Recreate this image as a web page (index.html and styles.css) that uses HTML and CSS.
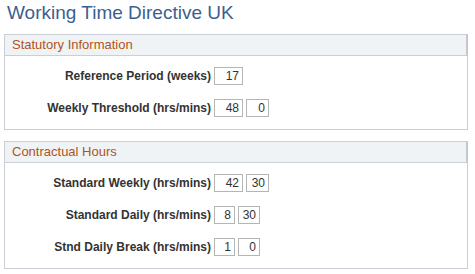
FILE: index.html
```html
<!DOCTYPE html>
<html lang="en">
<head>
    <meta charset="UTF-8">
    <title>Working Time Directive UK</title>
    <link rel="stylesheet" href="styles.css">
</head>
<body>
    <h1 class="page-title">Working Time Directive UK</h1>

    <div class="group">
        <div class="group-head">Statutory Information</div>
        <div class="group-body">
            <div class="row">
                <label class="lbl" for="refPeriod">Reference Period (weeks)</label>
                <input class="fld w29" type="text" id="refPeriod" value="17">
            </div>
            <div class="row">
                <label class="lbl" for="wkHrs">Weekly Threshold (hrs/mins)</label>
                <input class="fld w29" type="text" id="wkHrs" value="48">
                <input class="fld w23" type="text" value="0">
            </div>
        </div>
    </div>

    <div class="group">
        <div class="group-head">Contractual Hours</div>
        <div class="group-body">
            <div class="row">
                <label class="lbl" for="stdWk">Standard Weekly (hrs/mins)</label>
                <input class="fld w29" type="text" id="stdWk" value="42">
                <input class="fld w23" type="text" value="30">
            </div>
            <div class="row">
                <label class="lbl" for="stdDay">Standard Daily (hrs/mins)</label>
                <input class="fld w21" type="text" id="stdDay" value="8">
                <input class="fld w22" type="text" value="30">
            </div>
            <div class="row">
                <label class="lbl" for="brk">Stnd Daily Break (hrs/mins)</label>
                <input class="fld w21" type="text" id="brk" value="1">
                <input class="fld w22" type="text" value="0">
            </div>
        </div>
    </div>
</body>
</html>
```

FILE: styles.css
```css
body {
    margin: 0;
    font-family: 'Liberation Sans', Arial, sans-serif;
    background-color: #ffffff;
    color: #333;
}
.page-title {
    font-size: 19px;
    font-weight: normal;
    color: #3d5f8f;
    margin: 0;
    padding: 2px 0 0 7px;
    height: 32px;
    line-height: 22px;
}
.group {
    margin: 0 7px 11px 4px;
    border: 1px solid #cbcfd5;
}
.group-head {
    background-color: #eff3f5;
    border-bottom: 1px solid #cbcfd5;
    border-right: 2px solid #c4c8ce;
    margin-right: -1px;
    height: 20px;
    line-height: 20px;
    padding-left: 7px;
    font-size: 13px;
    color: #b0531c;
}
.group-body {
    padding: 11px 0 12px;
    display: flex;
    flex-direction: column;
    gap: 14px;
}
.row {
    display: flex;
    align-items: center;
    gap: 3px;
    height: 18px;
}
.lbl {
    width: 206px;
    text-align: right;
    font-size: 12px;
    font-weight: bold;
    color: #333;
}
.fld {
    box-sizing: border-box;
    height: 18px;
    margin: 0;
    padding: 0 3px 0 0;
    border: 1px solid #b5b5b5;
    text-align: right;
    font-family: 'Liberation Sans', Arial, sans-serif;
    font-size: 12px;
    color: #333;
    background: #fff;
}
.w29 { width: 29px; }
.w23 { width: 23px; }
.w21 { width: 21px; }
.w22 { width: 22px; }
```
